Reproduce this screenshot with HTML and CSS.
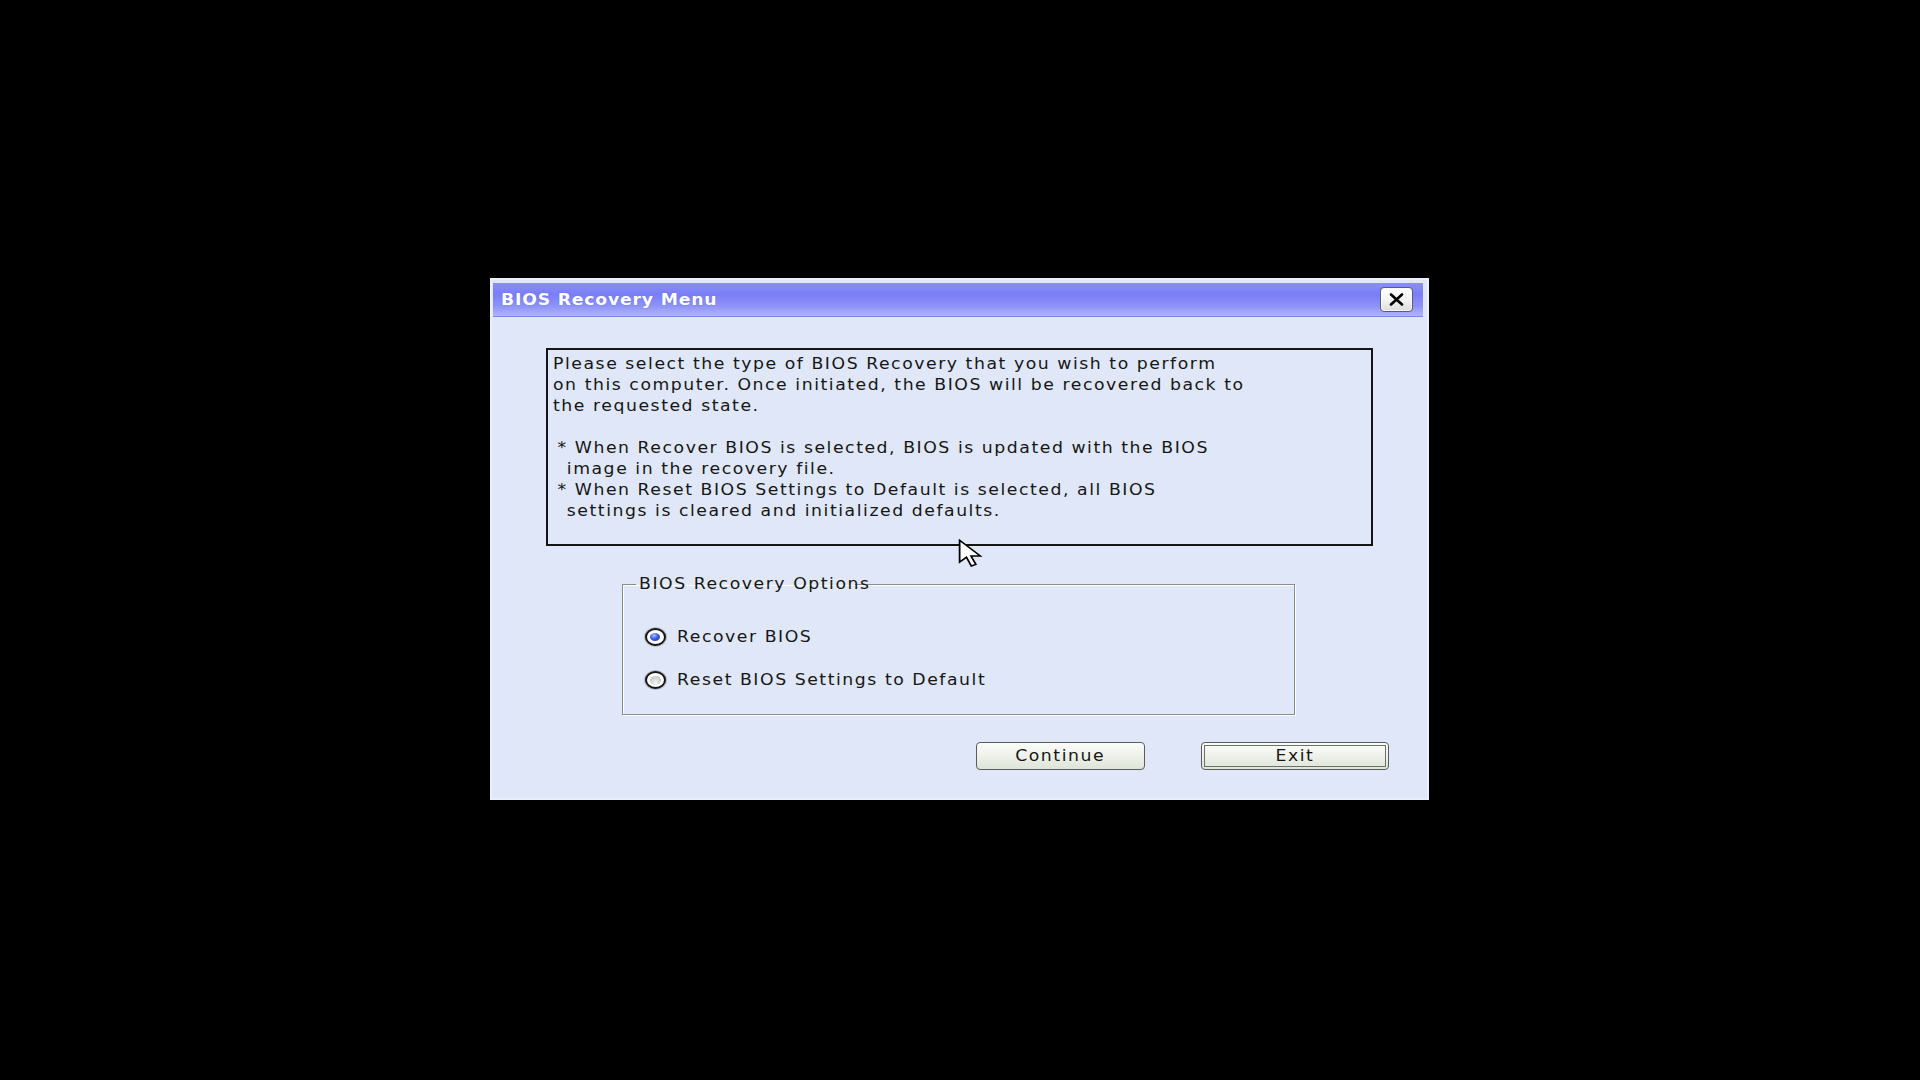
FILE: index.html
```html
<!DOCTYPE html>
<html>
<head>
<meta charset="utf-8">
<title>BIOS Recovery Menu</title>
<link rel="stylesheet" href="styles.css">
</head>
<body>
<div class="screen">
  <div class="dialog">
    <div class="titlebar">
      <span class="title wide">BIOS Recovery Menu</span>
      <button class="close" aria-label="Close">
        <svg width="15" height="13" viewBox="0 0 15 13"><path d="M2 1.5 L13 11.5 M13 1.5 L2 11.5" stroke="#000" stroke-width="2.6" stroke-linecap="round"/></svg>
      </button>
    </div>
    <div class="info">
      <div class="info-text wide">
        <div class="line">Please select the type of BIOS Recovery that you wish to perform</div>
        <div class="line">on this computer. Once initiated, the BIOS will be recovered back to</div>
        <div class="line">the requested state.</div>
        <div class="line blank">&nbsp;</div>
        <div class="line bullet">* When Recover BIOS is selected, BIOS is updated with the BIOS</div>
        <div class="line cont">image in the recovery file.</div>
        <div class="line bullet">* When Reset BIOS Settings to Default is selected, all BIOS</div>
        <div class="line cont">settings is cleared and initialized defaults.</div>
      </div>
    </div>
    <fieldset class="group">
      <legend class="legend"><span class="wide">BIOS Recovery Options</span></legend>
      <div class="options">
        <div class="option"><span class="radio checked"></span><span class="label wide">Recover BIOS</span></div>
        <div class="option"><span class="radio"></span><span class="label wide">Reset BIOS Settings to Default</span></div>
      </div>
    </fieldset>
    <div class="buttons">
      <button class="btn continue"><span class="wide center">Continue</span></button>
      <button class="btn exit"><span class="btn-inner"><span class="wide center">Exit</span></span></button>
    </div>
  </div>
  <svg class="cursor" width="26" height="30" viewBox="0 0 16 24" preserveAspectRatio="none">
    <path d="M1 1 L1 18.5 L5.2 14.6 L8.2 21.6 L11 20.4 L8 13.6 L13.8 13.6 Z" fill="#fff" stroke="#000" stroke-width="1.1" stroke-linejoin="miter"/>
  </svg>
</div>
</body>
</html>
```
FILE: styles.css
```css
html, body {
  margin: 0;
  padding: 0;
  background: #000;
}
.screen {
  position: relative;
  width: 1920px;
  height: 1080px;
  display: flex;
  align-items: center;
  justify-content: center;
  font-family: "DejaVu Sans", Verdana, sans-serif;
}
.wide {
  display: inline-block;
  transform: scaleX(1.15);
  transform-origin: 0 50%;
  letter-spacing: 1.35px;
  white-space: nowrap;
}
.wide.center {
  transform-origin: 50% 50%;
}
.dialog {
  box-sizing: border-box;
  width: 939px;
  height: 522px;
  margin-left: -2px;
  margin-top: -2px;
  background: #dfe7f8;
  border: 2px solid #eaeffb;
  padding: 3px 4px 0 1px;
  display: flex;
  flex-direction: column;
}
.titlebar {
  box-sizing: border-box;
  height: 34px;
  background: linear-gradient(to bottom, #8a8ef8 0%, #7a7ef7 35%, #8e93f8 70%, #b1b6fa 100%);
  border-bottom: 1px solid #7f86ea;
  display: flex;
  align-items: center;
  justify-content: space-between;
  padding: 0 10px 0 8px;
}
.title {
  color: #fff;
  font-size: 15px;
  font-weight: bold;
  letter-spacing: 0.7px;
  text-shadow: 0 0 1px rgba(60, 60, 160, 0.6);
}
.close {
  box-sizing: border-box;
  width: 33px;
  height: 25px;
  border: 1px solid #5e5e66;
  border-radius: 4px;
  background: linear-gradient(to bottom, #ffffff 0%, #f4f4f4 50%, #dcdcdc 100%);
  display: flex;
  align-items: center;
  justify-content: center;
  padding: 0;
  box-shadow: inset 0 0 0 1px #fafafa;
}
.info {
  box-sizing: border-box;
  width: 827px;
  height: 198px;
  margin: 31px 0 0 53px;
  border: 2px solid #151515;
  padding: 4px 0 0 5px;
  font-size: 15px;
  line-height: 21px;
  color: #161616;
}
.info-text {
  transform-origin: 0 0;
}
.line {
  white-space: nowrap;
}
.bullet { padding-left: 4px; }
.cont { padding-left: 12px; }
.group {
  box-sizing: border-box;
  width: 673px;
  height: 140px;
  margin: 29px 0 0 129px;
  padding: 0 0 0 22px;
  border: 1px solid #8a8c90;
  box-shadow: inset 1px 1px 0 #ffffff, 1px 1px 0 #ffffff;
  min-width: 0;
}
.legend {
  margin-left: -9px;
  padding: 0 3px;
  font-size: 15px;
  line-height: 18px;
  color: #161616;
}
.legend .wide {
  width: 213px;
}
.options {
  display: flex;
  flex-direction: column;
  gap: 19px;
  margin-top: 32px;
}
.option {
  height: 24px;
  display: flex;
  align-items: center;
}
.radio {
  box-sizing: border-box;
  position: relative;
  width: 21px;
  height: 18px;
  border-radius: 50%;
  border: 2px solid #151515;
  background: #ffffff;
  box-shadow: 0 0 0 1px rgba(120, 120, 120, 0.4);
  flex: none;
}
.radio::after {
  content: "";
  position: absolute;
  left: 3px;
  top: 2.5px;
  width: 11px;
  height: 9px;
  border-radius: 50%;
  background: radial-gradient(ellipse at 50% 75%, #f6f6f6 0%, #cfcfcf 60%, #a8a8a8 100%);
}
.radio.checked::after {
  left: 3.5px;
  top: 3px;
  width: 10px;
  height: 8px;
  background: radial-gradient(ellipse at 40% 30%, #a8c0ff 0%, #3a5ee8 45%, #1b2fa8 100%);
}
.label {
  margin-left: 11px;
  font-size: 15px;
  color: #161616;
}
.buttons {
  display: flex;
  justify-content: flex-end;
  gap: 56px;
  margin-top: 27px;
  padding-right: 34px;
}
.btn {
  box-sizing: border-box;
  height: 28px;
  border: 1.5px solid #5c5c5c;
  border-radius: 4px;
  background: linear-gradient(to bottom, #fbfcfa 0%, #eef2ea 50%, #dde4d8 100%);
  font-family: "DejaVu Sans", Verdana, sans-serif;
  font-size: 15px;
  color: #161616;
  padding: 0;
  display: flex;
  align-items: center;
  justify-content: center;
}
.continue { width: 169px; }
.exit { width: 188px; padding: 2px; }
.btn-inner {
  box-sizing: border-box;
  width: 100%;
  height: 100%;
  border: 1.5px solid #6e6e6e;
  display: flex;
  align-items: center;
  justify-content: center;
}
.cursor {
  position: absolute;
  left: 958px;
  top: 539px;
}
```
